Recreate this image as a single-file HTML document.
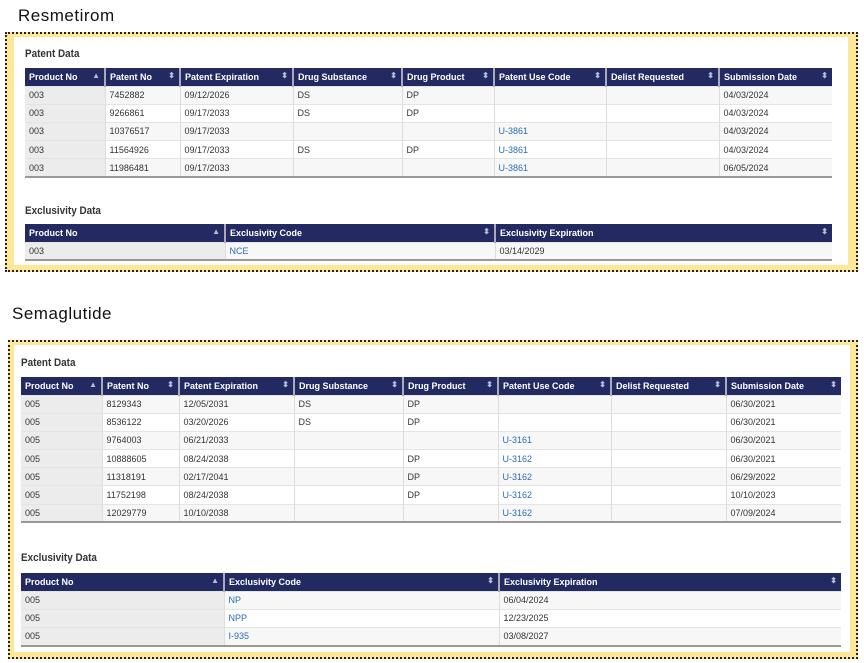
<!DOCTYPE html>
<html><head><meta charset="utf-8"><style>
*{margin:0;padding:0;box-sizing:border-box}
body{width:864px;height:663px;background:#fff;position:relative;font-family:"Liberation Sans",Arial,sans-serif;overflow:hidden}
.title{position:absolute;font-family:"Comic Sans MS","Liberation Sans",sans-serif;font-size:17px;color:#111;letter-spacing:0.5px}
.box{position:absolute;background:#fde89a;border:2px dotted #222}
.inner{position:absolute;background:#fff}
.h{position:absolute;font-size:11px;font-weight:bold;color:#333;transform:scaleX(0.9);transform-origin:left}
table{position:absolute;border-collapse:collapse;table-layout:fixed;font-size:9px;color:#333}
th{background:#232a62;color:#fff;text-align:left;font-weight:bold;padding:0 4px;height:18px;border-left:2px solid #aab;position:relative;white-space:nowrap}
th:first-child{border-left:none}
th span{position:absolute;right:4px;top:3px;font-size:8px;color:#b9bdd6}
td{height:18.2px;padding:0 4px;border-left:1px solid #ddd;border-top:1px solid #e4e4e4;white-space:nowrap}
tr:nth-child(odd) td{background:#f7f7f7}
tr:nth-child(even) td{background:#fff}
td:first-child{background:#ececec!important;border-left:none}
tbody tr:last-child td{border-bottom:2px solid #999}
a{color:#2a6db3;text-decoration:none}
</style></head><body>

<div class="title" style="left:18px;top:6px">Resmetirom</div>
<div class="box" style="left:5px;top:32px;width:853px;height:240px"></div>
<div class="inner" style="left:14px;top:37px;width:834px;height:228px"></div>
<div class="h" style="left:25px;top:48px">Patent Data</div>
<table style="left:25px;top:68px;width:807px">
<colgroup><col style="width:80px"><col style="width:75px"><col style="width:113px"><col style="width:109px"><col style="width:92px"><col style="width:112px"><col style="width:113px"><col style="width:113px"></colgroup>
<thead><tr><th>Product No<span>▲</span></th><th>Patent No<span>⬍</span></th><th>Patent Expiration<span>⬍</span></th><th>Drug Substance<span>⬍</span></th><th>Drug Product<span>⬍</span></th><th>Patent Use Code<span>⬍</span></th><th>Delist Requested<span>⬍</span></th><th>Submission Date<span>⬍</span></th></tr></thead>
<tbody>
<tr><td>003</td><td>7452882</td><td>09/12/2026</td><td>DS</td><td>DP</td><td></td><td></td><td>04/03/2024</td></tr>
<tr><td>003</td><td>9266861</td><td>09/17/2033</td><td>DS</td><td>DP</td><td></td><td></td><td>04/03/2024</td></tr>
<tr><td>003</td><td>10376517</td><td>09/17/2033</td><td></td><td></td><td><a>U-3861</a></td><td></td><td>04/03/2024</td></tr>
<tr><td>003</td><td>11564926</td><td>09/17/2033</td><td>DS</td><td>DP</td><td><a>U-3861</a></td><td></td><td>04/03/2024</td></tr>
<tr><td>003</td><td>11986481</td><td>09/17/2033</td><td></td><td></td><td><a>U-3861</a></td><td></td><td>06/05/2024</td></tr>
</tbody></table>
<div class="h" style="left:25px;top:205px">Exclusivity Data</div>
<table style="left:25px;top:224px;width:807px">
<colgroup><col style="width:200px"><col style="width:270px"><col style="width:337px"></colgroup>
<thead><tr><th>Product No<span>▲</span></th><th>Exclusivity Code<span>⬍</span></th><th>Exclusivity Expiration<span>⬍</span></th></tr></thead>
<tbody><tr><td>003</td><td><a>NCE</a></td><td>03/14/2029</td></tr></tbody></table>

<div class="title" style="left:12px;top:304px">Semaglutide</div>
<div class="box" style="left:8px;top:340px;width:850px;height:319px"></div>
<div class="inner" style="left:14px;top:345px;width:836px;height:307px"></div>
<div class="h" style="left:21px;top:357px">Patent Data</div>
<table style="left:21px;top:377px;width:820px">
<colgroup><col style="width:81px"><col style="width:77px"><col style="width:115px"><col style="width:109px"><col style="width:95px"><col style="width:113px"><col style="width:115px"><col style="width:115px"></colgroup>
<thead><tr><th>Product No<span>▲</span></th><th>Patent No<span>⬍</span></th><th>Patent Expiration<span>⬍</span></th><th>Drug Substance<span>⬍</span></th><th>Drug Product<span>⬍</span></th><th>Patent Use Code<span>⬍</span></th><th>Delist Requested<span>⬍</span></th><th>Submission Date<span>⬍</span></th></tr></thead>
<tbody>
<tr><td>005</td><td>8129343</td><td>12/05/2031</td><td>DS</td><td>DP</td><td></td><td></td><td>06/30/2021</td></tr>
<tr><td>005</td><td>8536122</td><td>03/20/2026</td><td>DS</td><td>DP</td><td></td><td></td><td>06/30/2021</td></tr>
<tr><td>005</td><td>9764003</td><td>06/21/2033</td><td></td><td></td><td><a>U-3161</a></td><td></td><td>06/30/2021</td></tr>
<tr><td>005</td><td>10888605</td><td>08/24/2038</td><td></td><td>DP</td><td><a>U-3162</a></td><td></td><td>06/30/2021</td></tr>
<tr><td>005</td><td>11318191</td><td>02/17/2041</td><td></td><td>DP</td><td><a>U-3162</a></td><td></td><td>06/29/2022</td></tr>
<tr><td>005</td><td>11752198</td><td>08/24/2038</td><td></td><td>DP</td><td><a>U-3162</a></td><td></td><td>10/10/2023</td></tr>
<tr><td>005</td><td>12029779</td><td>10/10/2038</td><td></td><td></td><td><a>U-3162</a></td><td></td><td>07/09/2024</td></tr>
</tbody></table>
<div class="h" style="left:21px;top:552px">Exclusivity Data</div>
<table style="left:21px;top:573px;width:820px">
<colgroup><col style="width:203px"><col style="width:275px"><col style="width:342px"></colgroup>
<thead><tr><th>Product No<span>▲</span></th><th>Exclusivity Code<span>⬍</span></th><th>Exclusivity Expiration<span>⬍</span></th></tr></thead>
<tbody>
<tr><td>005</td><td><a>NP</a></td><td>06/04/2024</td></tr>
<tr><td>005</td><td><a>NPP</a></td><td>12/23/2025</td></tr>
<tr><td>005</td><td><a>I-935</a></td><td>03/08/2027</td></tr>
</tbody></table>
</body></html>
